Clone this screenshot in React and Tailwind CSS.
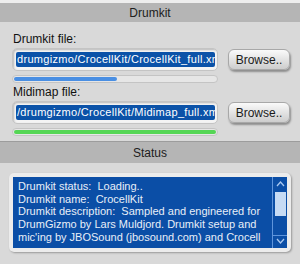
import React from 'react';

const font = { fontFamily: '"Liberation Sans", Arial, sans-serif' };

const FileRow = ({ path, onBrowse }) => (
  <div className="flex items-center">
    {/* Text field with selected path */}
    <div className="w-[206px] h-[23px] rounded-[5px] bg-[#f4f4f4] border border-[#c4c4c4] shadow-[inset_1px_1px_2px_rgba(0,0,0,0.25)] flex items-center pl-[3px] pr-[2px] overflow-hidden">
      <div className="h-[15px] w-full bg-[#0b52a8] rounded-[2px] overflow-hidden whitespace-nowrap text-white text-[11px] tracking-[0.3px] leading-[15px] pl-[1px]">
        {path}
      </div>
    </div>
    {/* Browse button */}
    <button
      onClick={onBrowse}
      className="ml-[10px] w-[62px] h-[21px] rounded-[6px] bg-gradient-to-b from-[#fafafa] to-[#cdcdcd] border border-[#a8a8a8] shadow-[1px_2px_2px_rgba(0,0,0,0.35)] text-[12px] text-[#1a1a1a] leading-none"
    >
      Browse..
    </button>
  </div>
);

const Progress = ({ value, color }) => (
  <div className="w-[206px] h-[8px] rounded-full bg-[#e6e6e6] border border-[#c4c4c4] p-[1px] mt-[4px]">
    <div className={`h-full rounded-full ${color}`} style={{ width: `${value}%` }} />
  </div>
);

const SectionHeader = ({ title }) => (
  <div className="h-[21px] bg-[#b5b5b5] flex items-center justify-center text-[12px] text-[#202020]">
    {title}
  </div>
);

export default function App() {
  const lines = [
    'Drumkit status:  Loading..',
    'Drumkit name:  CrocellKit',
    'Drumkit description:  Sampled and engineered for',
    'DrumGizmo by Lars Muldjord. Drumkit setup and',
    "mic'ing by JBOSound (jbosound.com) and Crocell",
  ];

  return (
    <div className="w-[300px] h-[264px] bg-[#d9d9d9] overflow-hidden" style={font}>
      <div className="h-[3px] bg-[#eeeeee]" />
      <div className="h-[19px] bg-[#b5b5b5] flex items-center justify-center text-[12px] text-[#202020]">
        Drumkit
      </div>

      {/* Drumkit / midimap file selection */}
      <div className="pl-[12px] pt-[8px]">
        <div className="h-[18px] text-[12px] leading-[18px] text-[#111] pl-[1px]">Drumkit file:</div>
        <FileRow path="drumgizmo/CrocellKit/CrocellKit_full.xml" />
        <Progress value={51} color="bg-[#4a8fe3]" />
        <div className="h-[18px] text-[12px] leading-[18px] text-[#111] pl-[1px]">Midimap file:</div>
        <FileRow path="/drumgizmo/CrocellKit/Midimap_full.xml" />
        <Progress value={100} color="bg-[#55d655]" />
      </div>

      <div className="mt-[5px] h-px bg-[#9c9c9c]" />
      <SectionHeader title="Status" />

      {/* Status box */}
      <div className="mx-[9px] mt-[10px] rounded-[5px] bg-[#ececec] p-[4px] shadow-[1px_1px_2px_rgba(0,0,0,0.3)]">
        <div className="h-[71px] bg-[#0b4ea6] flex">
          <div className="flex-1 pl-[5px] pt-[3px] text-[11px] leading-[12.7px] text-[#e8eef8] whitespace-pre overflow-hidden">
            {lines.map((l) => (
              <div key={l}>{l}</div>
            ))}
          </div>
          {/* Scrollbar */}
          <div className="w-[15px] border-l border-[#5f95dc] flex flex-col items-center">
            <svg width="11" height="10" viewBox="0 0 11 10" className="mt-[2px]">
              <path d="M2 7 L5.5 3 L9 7" stroke="#a9c8f0" strokeWidth="1.3" fill="none" />
            </svg>
            <div className="mt-[3px] w-[11px] h-[24px] bg-[#c6dbf4]" />
            <div className="flex-1" />
            <div className="w-full h-px bg-[#5f95dc]" />
            <svg width="11" height="10" viewBox="0 0 11 10" className="mb-[2px]">
              <path d="M2 3 L5.5 7 L9 3" stroke="#a9c8f0" strokeWidth="1.3" fill="none" />
            </svg>
          </div>
        </div>
      </div>
    </div>
  );
}
